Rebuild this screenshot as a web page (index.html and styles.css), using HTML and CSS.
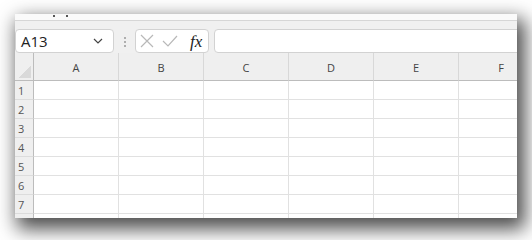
FILE: index.html
```html
<!DOCTYPE html>
<html lang="en">
<head>
    <meta charset="UTF-8">
    <title>Book1 - Excel</title>
    <link rel="stylesheet" href="styles.css">
</head>
<body>

<div class="window">
    <!-- bottom edge of the ribbon, mostly scrolled out of view -->
    <div class="ribbon">
        <span class="tick"></span>
        <span class="tick"></span>
    </div>

    <div class="formula-bar">
        <div class="name-box">
            <span class="cell-ref">A13</span>
            <svg class="chevron" width="10" height="6" viewBox="0 0 10 6">
                <polyline points="1,1 5,5 9,1" fill="none" stroke="#444" stroke-width="1.2"/>
            </svg>
        </div>
        <svg class="grip" width="4" height="12" viewBox="0 0 4 12">
            <circle cx="2" cy="2" r="1" fill="#999"/>
            <circle cx="2" cy="6" r="1" fill="#999"/>
            <circle cx="2" cy="10" r="1" fill="#999"/>
        </svg>
        <div class="fx-box">
            <svg class="icon" width="14" height="14" viewBox="0 0 14 14">
                <path d="M1 1 L13 13 M13 1 L1 13" stroke="#b8b8b8" stroke-width="1.2" fill="none"/>
            </svg>
            <svg class="icon" width="16" height="12" viewBox="0 0 16 12">
                <polyline points="1,6 6,11 15,1" stroke="#b8b8b8" stroke-width="1.2" fill="none"/>
            </svg>
            <span class="fx">fx</span>
        </div>
        <div class="formula-input"></div>
    </div>

    <div class="sheet">
        <div class="corner"><span class="corner-mark"></span></div>
        <div class="col-head">A</div>
        <div class="col-head">B</div>
        <div class="col-head">C</div>
        <div class="col-head">D</div>
        <div class="col-head">E</div>
        <div class="col-head">F</div>

        <div class="row-head">1</div><div class="cell"></div><div class="cell"></div><div class="cell"></div><div class="cell"></div><div class="cell"></div><div class="cell"></div>
        <div class="row-head">2</div><div class="cell"></div><div class="cell"></div><div class="cell"></div><div class="cell"></div><div class="cell"></div><div class="cell"></div>
        <div class="row-head">3</div><div class="cell"></div><div class="cell"></div><div class="cell"></div><div class="cell"></div><div class="cell"></div><div class="cell"></div>
        <div class="row-head">4</div><div class="cell"></div><div class="cell"></div><div class="cell"></div><div class="cell"></div><div class="cell"></div><div class="cell"></div>
        <div class="row-head">5</div><div class="cell"></div><div class="cell"></div><div class="cell"></div><div class="cell"></div><div class="cell"></div><div class="cell"></div>
        <div class="row-head">6</div><div class="cell"></div><div class="cell"></div><div class="cell"></div><div class="cell"></div><div class="cell"></div><div class="cell"></div>
        <div class="row-head">7</div><div class="cell"></div><div class="cell"></div><div class="cell"></div><div class="cell"></div><div class="cell"></div><div class="cell"></div>
        <!-- row 8 only peeks in under the fold -->
        <div class="row-head"></div><div class="cell"></div><div class="cell"></div><div class="cell"></div><div class="cell"></div><div class="cell"></div><div class="cell"></div>
    </div>
</div>

</body>
</html>
```

FILE: styles.css
```css
* {
    box-sizing: border-box;
}
html,
body {
    height: 240px;
}
body {
    margin: 0;
    background-color: #fff;
    font-family: "Open Sans", "Noto Sans", sans-serif;
    color: #333;
    overflow: hidden;
}
.window {
    margin: 14px 0 0 15px;
    width: 502px;
    height: 204px;
    overflow: hidden;
    background-color: #fff;
    box-shadow: 5px 8px 18px 3px rgba(0, 0, 0, 0.7);
}

/* ribbon remnant */
.ribbon {
    height: 7px;
    background-color: #fafafa;
    border-bottom: 1px solid #d6d6d6;
    display: flex;
    gap: 11px;
    padding-left: 38px;
}
.tick {
    width: 2px;
    height: 2px;
    margin-top: 1px;
    background-color: #555;
}

/* formula bar */
.formula-bar {
    height: 32px;
    padding-top: 8px;
    background-color: #f0f0f0;
    display: flex;
    align-items: flex-start;
}
.name-box {
    width: 99px;
    height: 24px;
    background-color: #fff;
    border: 1px solid #d2d2d2;
    border-radius: 4px;
    display: flex;
    align-items: center;
    justify-content: space-between;
    padding: 0 10px 0 5px;
}
.cell-ref {
    font-size: 15px;
    color: #222;
    line-height: 1;
}
.chevron {
    display: block;
}
.grip {
    margin: 7px 8px 0 9px;
}
.fx-box {
    width: 74px;
    height: 24px;
    background-color: #fff;
    border: 1px solid #d2d2d2;
    border-radius: 4px;
    display: flex;
    align-items: center;
    padding-left: 4px;
    gap: 8px;
}
.icon {
    display: block;
}
.fx {
    font-family: "Liberation Serif", serif;
    font-style: italic;
    font-size: 17px;
    color: #222;
    margin-left: 4px;
    line-height: 1;
}
.formula-input {
    flex: 1;
    height: 24px;
    margin-left: 5px;
    margin-right: -6px;
    background-color: #fff;
    border: 1px solid #d2d2d2;
    border-radius: 4px;
}

/* grid */
.sheet {
    display: grid;
    grid-template-columns: 19px repeat(6, 85px);
    grid-template-rows: 28px;
    grid-auto-rows: 19px;
    font-size: 11px;
}
.corner,
.col-head {
    background-color: #efefef;
    border-bottom: 1px solid #bcbcbc;
    border-right: 1px solid #d8d8d8;
}
.corner {
    border-right-color: #bcbcbc;
    position: relative;
}
.corner-mark {
    position: absolute;
    right: 2px;
    bottom: 2px;
    width: 13px;
    height: 13px;
    background: linear-gradient(to bottom right, transparent 50%, #d9d9d9 50%);
}
.col-head {
    display: flex;
    align-items: center;
    justify-content: center;
    color: #444;
    padding-top: 1px;
}
.row-head {
    background-color: #efefef;
    border-right: 1px solid #bcbcbc;
    border-bottom: 1px solid #dcdcdc;
    color: #555;
    padding-left: 3px;
    display: flex;
    align-items: center;
}
.cell {
    border-right: 1px solid #e1e1e1;
    border-bottom: 1px solid #e1e1e1;
}
```
